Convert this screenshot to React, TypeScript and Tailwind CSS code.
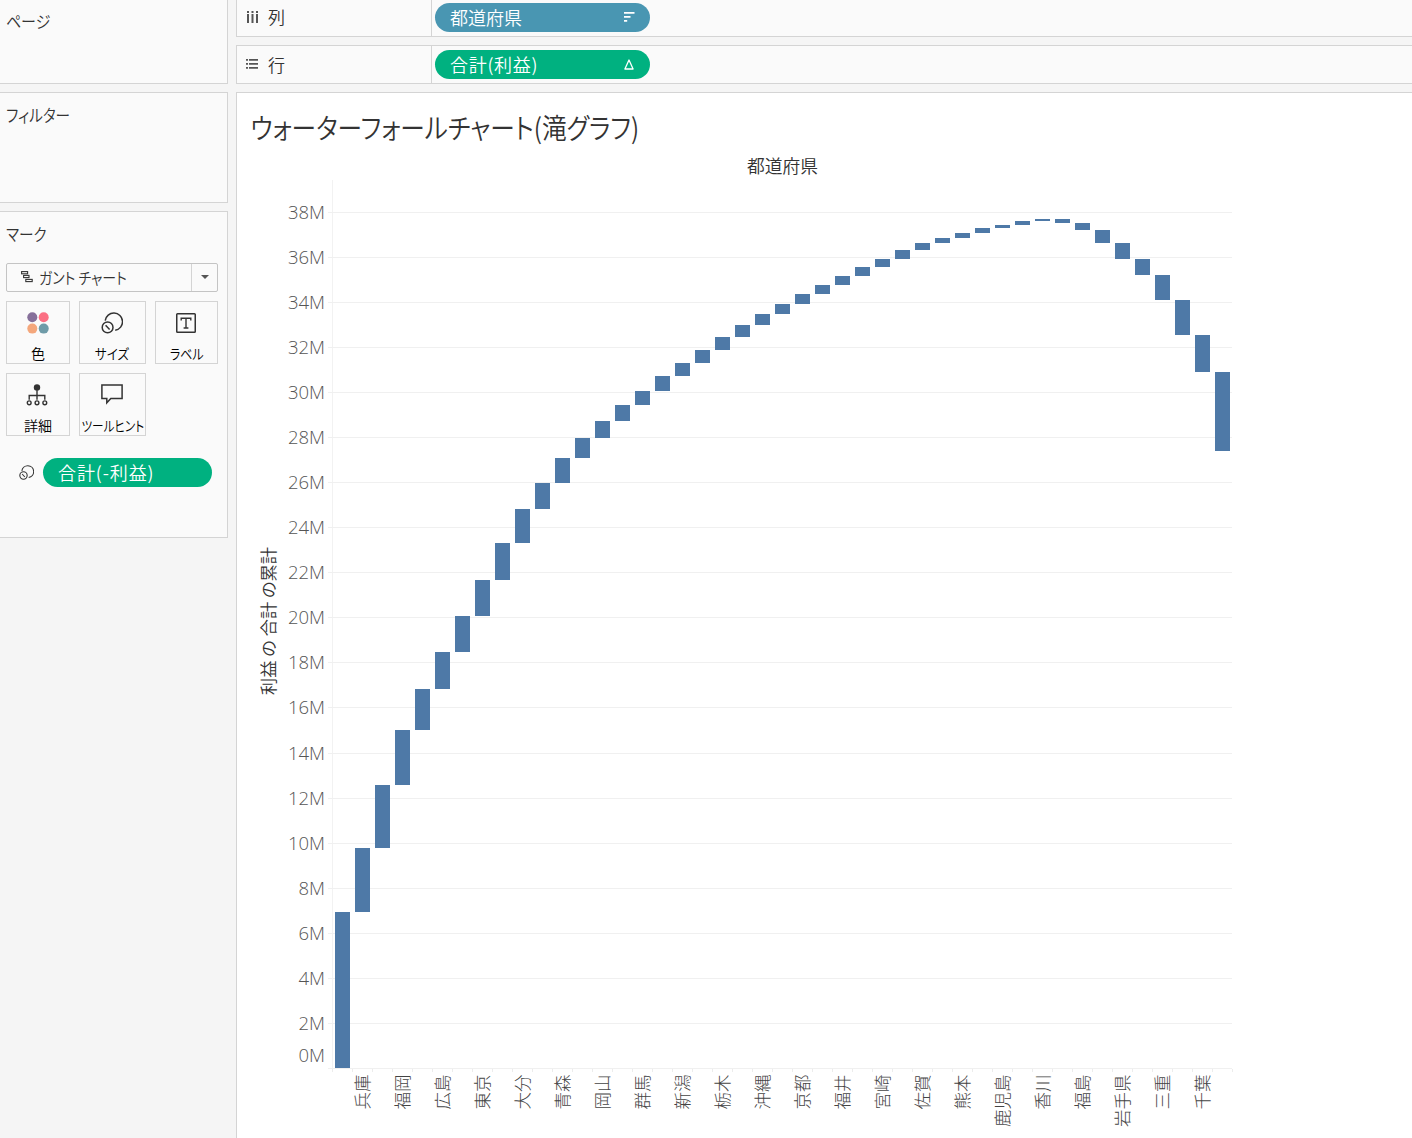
import React from "react";

const panelClassName = "border-y border-r border-[#d4d4d4] bg-[#fafafa]";
const cardClassName =
  "flex flex-col items-center h-[63px] border border-[#d4d4d4] bg-[#fafafa] text-black text-[14px] whitespace-nowrap";
const pillClassName =
  "flex items-center h-[29px] rounded-full text-white text-[18px] pl-[15px]";

const barColor = "#4e79a7";

// running total after every prefecture, as [top, bottom] on the canvas
const bars = [
  [912, 1068], [848, 912], [785, 848], [730, 785], [689, 730],
  [652, 689], [616, 652], [580, 616], [543, 580], [509, 543],
  [483, 509], [458, 483], [438, 458], [421, 438], [405, 421],
  [391, 405], [376, 391], [363, 376], [350, 363], [337, 350],
  [325, 337], [314, 325], [304, 314], [294, 304], [285, 294],
  [276, 285], [267, 276], [259, 267], [250, 259], [243, 250],
  [238, 243], [233, 238], [228, 233], [225, 228], [221, 225],
  [219, 221], [219, 223], [223, 230], [230, 243], [243, 259],
  [259, 275], [275, 300], [300, 335], [335, 372], [372, 451],
];

const prefectures = [
  "兵庫", "福岡", "広島", "東京", "大分", "青森", "岡山", "群馬",
  "新潟", "栃木", "沖縄", "京都", "福井", "宮崎", "佐賀", "熊本",
  "鹿児島", "香川", "福島", "岩手県", "三重", "千葉",
];

const yTicks = Array.from({ length: 20 }, (_, i) => ({
  label: 38 - i * 2 + "M",
  y: i < 12 ? 212 + i * 45 : 213 + i * 45,
}));

function SizeIcon({ className, stroke = 1.5 }: { className: string; stroke?: number }) {
  return (
    <svg viewBox="0 0 22 22" className={className} fill="none" stroke="#333" strokeWidth={stroke}>
      <path d="M4.200 8.600A8.700 8.700 0 1 1 14.200 18.300" />
      <circle cx="6.6" cy="15.4" r="5.4" />
      <path d="M4.600 13.200l4 4.400" />
    </svg>
  );
}

function ColorIcon() {
  return (
    <svg viewBox="0 0 22 22" className="w-[22px] h-[22px]">
      <circle cx="5.3" cy="5.3" r="5" fill="#86709a" />
      <circle cx="16.7" cy="5.3" r="5" fill="#fb6f83" />
      <circle cx="5.3" cy="16.6" r="5" fill="#f4a77c" />
      <circle cx="16.7" cy="16.6" r="5" fill="#6f9ba8" />
    </svg>
  );
}

function LabelIcon() {
  return (
    <svg viewBox="0 0 22 22" className="w-[22px] h-[22px] mr-[2px]" fill="none" stroke="#333">
      <rect x="1.75" y="1.75" width="18.5" height="18.5" rx="0.8" strokeWidth="1.5" />
      <path d="M6.200 8.400V6.200h9.600v2.200M11 6.200v9.800M8.600 16h4.800" strokeWidth="1.4" />
    </svg>
  );
}

function DetailIcon() {
  return (
    <svg viewBox="0 0 22 22" className="w-[22px] h-[22px] mr-[2px]" fill="none" stroke="#333" strokeWidth="1.4">
      <circle cx="11" cy="3.4" r="3.2" fill="#333" stroke="none" />
      <path d="M11 6v9.800M3.200 15.800v-4.300h15.600v4.300" />
      <circle cx="3.2" cy="18.8" r="1.9" />
      <circle cx="11" cy="18.8" r="1.9" />
      <circle cx="18.8" cy="18.8" r="1.9" />
    </svg>
  );
}

function TooltipIcon() {
  return (
    <svg viewBox="0 0 22 22" className="w-[22px] h-[22px] mr-[2px]" fill="none" stroke="#333" strokeWidth="1.5">
      <path d="M.9 1h20.200v13.400H9.800l-4 4.400v-4.400H.9z" />
    </svg>
  );
}

function Sidebar() {
  const cards = [
    { id: 1, text: "色", icon: <ColorIcon />, scale: "" },
    { id: 2, text: "サイズ", icon: <SizeIcon className="w-[22px] h-[22px] mr-[2px]" />, scale: "scale-x-[0.9]" },
    { id: 3, text: "ラベル", icon: <LabelIcon />, scale: "scale-x-[0.86]" },
    { id: 4, text: "詳細", icon: <DetailIcon />, scale: "" },
    { id: 5, text: "ツールヒント", icon: <TooltipIcon />, scale: "scale-x-[0.83]" },
  ];
  return (
    <aside className="flex flex-col gap-2 w-[228px] shrink-0 text-[17px]">
      <div className={panelClassName + " h-[84px] border-t-0 pl-[6px] pt-[8px]"}>
        <div className="origin-left scale-x-[0.88]">ページ</div>
      </div>
      <div className={panelClassName + " h-[111px] pl-[6px] pt-[9px]"}>
        <div className="origin-left scale-x-[0.86]">フィルター</div>
      </div>
      <div className={panelClassName + " h-[327px] pl-[6px] pt-[9px]"}>
        <div className="origin-left scale-x-[0.86]">マーク</div>

        {/* Mark type dropdown */}
        <div className="flex items-center mt-[16px] w-[212px] h-[29px] border border-[#c4c4c4] rounded-[2px] text-[16px]">
          <svg viewBox="0 0 12 12" className="w-3 h-3 ml-[14px] shrink-0" fill="none" stroke="#333" strokeWidth="1.1">
            <rect x=".6" y=".6" width="6" height="2.2" />
            <rect x="2.6" y="4.4" width="5.4" height="2.2" />
            <rect x="4.8" y="8.4" width="6.4" height="2.2" />
          </svg>
          <div className="w-[158px] shrink-0 pl-[6px] whitespace-nowrap">
            <div className="origin-left scale-x-[0.87]">ガント チャート</div>
          </div>
          <div className="flex items-center justify-center grow h-full border-l border-[#d4d4d4]">
            <svg viewBox="0 0 8 4" className="w-[8px] h-[4px]">
              <path d="M0 0h8L4 4z" fill="#555" />
            </svg>
          </div>
        </div>

        <div className="grid grid-cols-[64px_67px_63px] gap-x-[9px] gap-y-[9px] mt-[9px]">
          {cards.map((card) => (
            <div key={card.id} className={cardClassName}>
              <div className="h-[22px] mt-[10px]">{card.icon}</div>
              <div className={"mt-[9px] leading-5 " + card.scale}>{card.text}</div>
            </div>
          ))}
        </div>

        <div className="flex items-center mt-[22px]">
          <SizeIcon className="w-[15px] h-[15px] ml-[13px] mr-[9px]" stroke={1.6} />
          <div className={pillClassName + " w-[169px] bg-[#00b180] tracking-[0.9px]"}>合計(-利益)</div>
        </div>
      </div>
    </aside>
  );
}

function Shelves() {
  return (
    <>
      <div className="flex h-[37px] border-l border-b border-[#d4d4d4] bg-[#fafafa]">
        <div className="flex items-center w-[195px] border-r border-[#d4d4d4] pl-[10px] pb-[2px] text-[17px]">
          <svg viewBox="0 0 11 12" className="w-[11px] h-[12px] mr-[10px]" fill="#555">
            <path d="M0 0h2v2H0zM4.500 0h2v2h-2zM9 0h2v2H9zM0 3h2v9H0zM4.500 3h2v9h-2zM9 3h2v9H9z" />
          </svg>
          列
        </div>
        <div className={pillClassName + " w-[215px] mt-[3px] ml-[3px] bg-[#4996b2]"}>
          <span className="grow">都道府県</span>
          <svg viewBox="0 0 11 10" className="w-[11px] h-[10px] mr-[15px] mb-[2px]" fill="#fff">
            <path d="M0 0h10.500v1.700H0zM0 4h6.500v1.700H0zM0 8h3.200v1.700H0z" />
          </svg>
        </div>
      </div>
      <div className="flex h-[39px] mt-2 border-l border-y border-[#d4d4d4] bg-[#fafafa]">
        <div className="flex items-center w-[195px] border-r border-[#d4d4d4] pl-[9px] text-[17px]">
          <svg viewBox="0 0 12 10" className="w-[12px] h-[10px] mr-[10px] mb-[2px]" fill="#555">
            <path d="M0 0h2v1.700H0zM3 0h9v1.700H3zM0 4h2v1.700H0zM3 4h9v1.700H3zM0 8h2v1.700H0zM3 8h9v1.700H3z" />
          </svg>
          行
        </div>
        <div className={pillClassName + " w-[215px] mt-[4px] ml-[3px] bg-[#00b180]"}>
          <span className="grow tracking-[0.7px]">合計(利益)</span>
          <svg viewBox="0 0 10 11" className="w-[10px] h-[11px] mr-[16px] mb-px" fill="none" stroke="#fff" strokeWidth="1.3">
            <path d="M5 1L9.100 10H.9z" strokeLinejoin="round" />
          </svg>
        </div>
      </div>
    </>
  );
}

function WaterfallChart() {
  return (
    <svg viewBox="237 150 1000 988" className="block w-[1000px] h-[988px]">
      <text x="782.500" y="173" textAnchor="middle" fontSize="17.800" fill="#333">
        都道府県
      </text>
      <text transform="translate(275 621) rotate(-90)" textAnchor="middle" fontSize="17.200" fill="#333">
        利益 の 合計 の累計
      </text>

      {/* Axis and grid lines */}
      <g shapeRendering="crispEdges">
        <rect x="332" y="180" width="1" height="888" fill="#f2f2f2" />
        {yTicks.map((tick) => (
          <rect key={tick.label} x="328" y={tick.y} width="904" height="1" fill="#f0f0f0" />
        ))}
        {Array.from({ length: 46 }, (_, i) => (
          <rect key={i} x={332 + i * 20} y="1069" width="1" height="3" fill="#ececec" />
        ))}
        {bars.map(([top, bottom], i) => (
          <rect key={i} x={335 + i * 20} y={top} width="15" height={bottom - top} fill={barColor} />
        ))}
      </g>

      <g fontSize="18.500" fontFamily="'Open Sans', sans-serif" fontWeight="300" fill="#555" textAnchor="end">
        {yTicks.map((tick) => (
          <text key={tick.label} x="325" y={(tick.label === "0M" ? 1055 : tick.y) + 7}>
            {tick.label}
          </text>
        ))}
      </g>
      <g fontSize="17.500" fontWeight="300" fill="#444" textAnchor="end">
        {prefectures.map((name, i) => (
          <text key={name} transform={`translate(${368.5 + i * 40} 1074.500) rotate(-90)`}>
            {name}
          </text>
        ))}
      </g>
    </svg>
  );
}

export default function App() {
  return (
    <div className="flex gap-2 w-[1412px] h-[1138px] overflow-hidden bg-[#f5f5f5] text-[#333] font-['Noto_Sans_CJK_JP',sans-serif] [font-feature-settings:'palt'] font-[350]">
      <Sidebar />
      <main className="flex flex-col grow min-w-0">
        <Shelves />
        <div className="grow mt-2 border-l border-t border-[#d4d4d4] bg-white">
          <h1 className="h-[57px] pl-[15px] pt-[14px] text-[28px] leading-[40px] whitespace-nowrap origin-left scale-x-[0.882]">
            ウォーターフォールチャート(滝グラフ)
          </h1>
          <WaterfallChart />
        </div>
      </main>
    </div>
  );
}
